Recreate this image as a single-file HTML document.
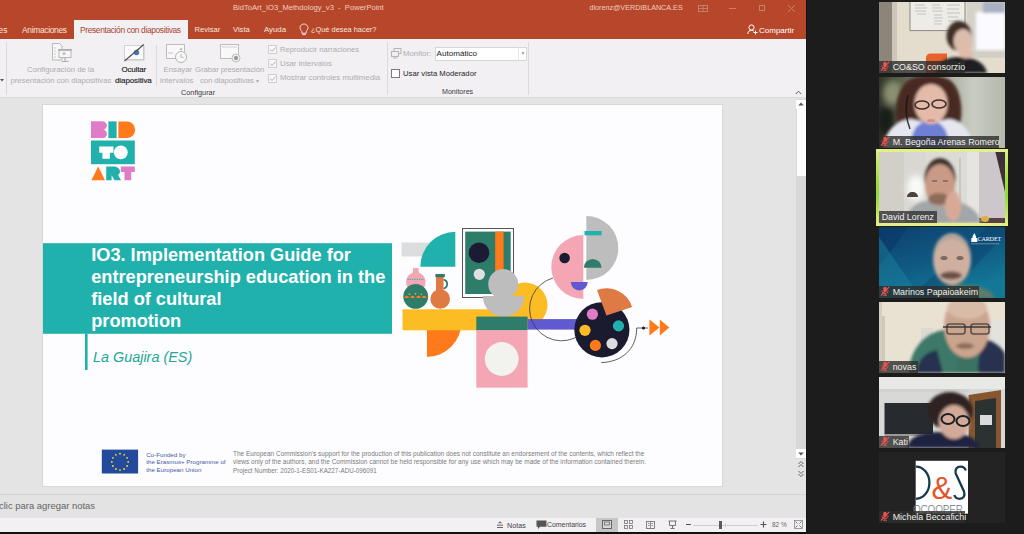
<!DOCTYPE html>
<html><head><meta charset="utf-8">
<style>
*{box-sizing:border-box}
html,body{margin:0;padding:0}
body{width:1024px;height:534px;overflow:hidden;position:relative;background:#1c1c1c;font-family:"Liberation Sans",sans-serif}
.a{position:absolute}
.t{position:absolute;white-space:nowrap;line-height:1}
#ppt{left:0;top:0;width:806px;height:532px;overflow:hidden}
#title{left:0;top:0;width:806px;height:39px;background:#b7472a}
#ribbon{left:0;top:39px;width:806px;height:58px;background:#f2f0f2}
#editor{left:0;top:97px;width:806px;height:398px;background:#e4e4e4;border-top:1px solid #d9d9d9}
#notes{left:0;top:494px;width:806px;height:24px;background:#e3e3e3;border-top:1px solid #d3d3d3}
#status{left:0;top:518px;width:806px;height:14px;background:#f2f0f2}
.tw{color:#f6e6de}
.gr{color:#adadad}
.dk{color:#3c3c3c}
.sep{position:absolute;width:1px;background:#dadada}
.tile{position:absolute;left:879px;width:126px;height:71px;overflow:hidden}
.nb{position:absolute;left:0;bottom:0;height:12.5px;background:rgba(45,45,42,.8)}
.nm{position:absolute;top:2px;color:#f0f0f0;font-size:8.9px;line-height:1;white-space:nowrap}
.mic{position:absolute;left:2px;top:2px;width:10px;height:10px}
</style></head><body>
<div id="ppt" class="a">
  <div id="title" class="a"></div>
  <!-- title bar texts -->
  <div class="t" style="left:233px;top:4px;font-size:7.6px;color:#efcfc3">BidToArt_IO3_Methdology_v3&nbsp; - &nbsp;PowerPoint</div>
  <div class="t" style="left:589.5px;top:4px;font-size:7.2px;color:#efcfc3">dlorenz@VERDIBLANCA.ES</div>
  <!-- tabs -->
  <div class="t tw" style="left:-1.5px;top:25.5px;font-size:8.4px">es</div>
  <div class="t tw" style="left:22px;top:25.5px;font-size:8.4px;letter-spacing:-.3px">Animaciones</div>
  <div class="a" style="left:74px;top:20px;width:114px;height:19px;background:#f2f0f2"></div>
  <div class="t" style="left:80px;top:25.5px;font-size:8.4px;color:#a8442e;letter-spacing:-.35px">Presentación con diapositivas</div>
  <div class="t tw" style="left:194.5px;top:25.5px;font-size:7.6px">Revisar</div>
  <div class="t tw" style="left:233px;top:25.5px;font-size:7.6px">Vista</div>
  <div class="t tw" style="left:264px;top:25.5px;font-size:7.8px">Ayuda</div>
  <div class="t tw" style="left:311px;top:25.5px;font-size:7.4px">¿Qué desea hacer?</div>
  <div class="t" style="left:759px;top:26.5px;font-size:8px;color:#fff">Compartir</div>

  <div id="ribbon" class="a"></div>
  <!-- title bar controls -->
  <svg class="a" style="left:697px;top:4px" width="12" height="9" viewBox="0 0 12 9"><rect x="1.5" y="1.5" width="9" height="6" fill="none" stroke="#c47e68" stroke-width="1"/><line x1="1.5" y1="4.5" x2="10.5" y2="4.5" stroke="#c47e68"/><line x1="6" y1="1.5" x2="6" y2="7.5" stroke="#c47e68"/></svg>
  <div class="a" style="left:729px;top:8px;width:7px;height:1px;background:#c88068"></div>
  <div class="a" style="left:759px;top:5px;width:6px;height:6px;border:1px solid #c88068"></div>
  <svg class="a" style="left:787px;top:4px" width="9" height="9" viewBox="0 0 9 9"><path d="M1 1L8 8M8 1L1 8" stroke="#c88068" stroke-width="1"/></svg>
  <svg class="a" style="left:747px;top:24px" width="11" height="11" viewBox="0 0 11 11"><circle cx="4.5" cy="3.5" r="2.6" fill="none" stroke="#fff" stroke-width="1"/><path d="M0.8 10C1 7.3 2.5 6.4 4.5 6.4C5.5 6.4 6.3 6.7 6.9 7.2" fill="none" stroke="#fff" stroke-width="1"/><path d="M8.5 6.5V10.5M6.5 8.5H10.5" stroke="#fff" stroke-width="1"/></svg>
  <svg class="a" style="left:299px;top:23px" width="10" height="13" viewBox="0 0 10 13"><path d="M5 1C2.7 1 1 2.7 1 4.8C1 6.5 2.3 7.4 2.8 8.6V10.2H7.2V8.6C7.7 7.4 9 6.5 9 4.8C9 2.7 7.3 1 5 1Z" fill="none" stroke="#f2dcd2" stroke-width="1"/><path d="M3.2 11.6H6.8" stroke="#f2dcd2"/></svg>

  <!-- ribbon content -->
  <div class="sep" style="left:6px;top:42px;height:53px"></div>
  <svg class="a" style="left:0;top:79px" width="4" height="3" viewBox="0 0 4 3"><path d="M0 0H4L2 2.5Z" fill="#555"/></svg>
  <!-- config icon -->
  <svg class="a" style="left:51px;top:43px" width="22" height="20" viewBox="0 0 22 20"><path d="M1.5 0.5H8.5L11 3V17H1.5Z" fill="#f7f7f7" stroke="#b8b8b8"/><path d="M3 5h2M3 8h2M3 11h2M3 14h2" stroke="#c9c9c9"/><rect x="7" y="6" width="14" height="1.5" fill="#b0b0b0"/><rect x="8" y="7.5" width="12" height="7" fill="#f7f7f7" stroke="#b8b8b8"/><circle cx="13" cy="10.5" r="1.6" fill="#c0c0c0"/><path d="M14 14.5V18M10.5 18.5H17.5" stroke="#b0b0b0" stroke-width="1.2"/></svg>
  <div class="t gr" style="left:27px;top:66px;font-size:7.8px">Configuración de la</div>
  <div class="t gr" style="left:10.5px;top:76.5px;font-size:7.8px;letter-spacing:-.05px">presentación con diapositivas</div>
  <!-- ocultar icon -->
  <svg class="a" style="left:123px;top:43px" width="22" height="19" viewBox="0 0 22 19"><rect x="1.5" y="2.5" width="19" height="14" fill="#fbfbfb" stroke="#d2d2d2"/><path d="M2 17H21V3" fill="none" stroke="#c4c4c4" stroke-width="1"/><circle cx="13.5" cy="9.5" r="2.7" fill="#3b78c4"/><path d="M13.5 9.5V6.8A2.7 2.7 0 0 0 10.9 8.8Z" fill="#e8843c"/><path d="M1.5 18L20.8 1.5" stroke="#4a4a4a" stroke-width="1.1"/></svg>
  <div class="t" style="left:121.5px;top:66px;font-size:8px;color:#1e1e1e;-webkit-text-stroke:.15px #1e1e1e;letter-spacing:-.2px">Ocultar</div>
  <div class="t" style="left:115px;top:76.5px;font-size:8px;color:#1e1e1e;-webkit-text-stroke:.15px #1e1e1e;letter-spacing:-.1px">diapositiva</div>
  <div class="sep" style="left:156px;top:45px;height:41px"></div>
  <!-- ensayar icon -->
  <svg class="a" style="left:166px;top:44px" width="22" height="20" viewBox="0 0 22 20"><rect x="0.5" y="0.5" width="18" height="14" fill="#f8f8f8" stroke="#bdbdbd"/><path d="M2 9h5" stroke="#c8c8c8"/><circle cx="15" cy="13" r="5.5" fill="#f8f8f8" stroke="#b4b4b4"/><path d="M15 10v3.3h2.5" stroke="#b4b4b4" fill="none"/><path d="M13.5 4.5h3l-1.5 2z" fill="#a0a0a0"/></svg>
  <div class="t gr" style="left:163.5px;top:66px;font-size:7.8px">Ensayar</div>
  <div class="t gr" style="left:160px;top:76.5px;font-size:7.8px">intervalos</div>
  <!-- grabar icon -->
  <svg class="a" style="left:220px;top:44px" width="22" height="20" viewBox="0 0 22 20"><rect x="0.5" y="0.5" width="18" height="14" fill="#f8f8f8" stroke="#bdbdbd"/><path d="M2 3h15" stroke="#d0d0d0"/><circle cx="16" cy="14" r="4" fill="#f4f4f4" stroke="#bdbdbd"/><circle cx="16" cy="14" r="2.2" fill="#9a9a9a"/></svg>
  <div class="t gr" style="left:195px;top:66px;font-size:7.8px;letter-spacing:-.1px">Grabar presentación</div>
  <div class="t gr" style="left:200px;top:76.5px;font-size:7.8px;letter-spacing:-.1px">con diapositivas <span style="font-size:6px">▾</span></div>
  <!-- checkboxes -->
  <div class="a" style="left:268px;top:45px;width:9px;height:9px;border:1px solid #cfcfcf;background:#f8f8f8"></div>
  <div class="a" style="left:268px;top:59px;width:9px;height:9px;border:1px solid #cfcfcf;background:#f8f8f8"></div>
  <div class="a" style="left:268px;top:74px;width:9px;height:9px;border:1px solid #cfcfcf;background:#f8f8f8"></div>
  <svg class="a" style="left:268px;top:45px" width="9" height="40" viewBox="0 0 9 40"><path d="M2 4.5l2 2 3.5-4M2 18.5l2 2 3.5-4M2 33.5l2 2 3.5-4" fill="none" stroke="#b0b0b0" stroke-width="1"/></svg>
  <div class="t gr" style="left:280px;top:45.5px;font-size:7.6px">Reproducir narraciones</div>
  <div class="t gr" style="left:280px;top:59.5px;font-size:7.8px">Usar intervalos</div>
  <div class="t gr" style="left:280px;top:74px;font-size:7.8px">Mostrar controles multimedia</div>
  <div class="t dk" style="left:181px;top:88.5px;font-size:7.3px">Configurar</div>
  <div class="sep" style="left:387px;top:42px;height:53px"></div>
  <!-- monitors -->
  <svg class="a" style="left:391px;top:48px" width="11" height="11" viewBox="0 0 11 11"><rect x="3" y="0.5" width="7" height="5" fill="#f0f0f0" stroke="#b5b5b5"/><rect x="0.5" y="3.5" width="7" height="5" fill="#f0f0f0" stroke="#b5b5b5"/><path d="M2 10h4" stroke="#b5b5b5"/></svg>
  <div class="t gr" style="left:403px;top:50px;font-size:7.8px">Monitor:</div>
  <div class="a" style="left:435px;top:46.5px;width:91.5px;height:14px;background:#fff;border:1px solid #d6d6d6"></div>
  <div class="a" style="left:518px;top:47px;width:1px;height:13px;background:#e6e6e6"></div>
  <div class="t" style="left:520.5px;top:51px;font-size:5px;color:#999">▼</div>
  <div class="t" style="left:436.5px;top:49.5px;font-size:8.1px;color:#222">Automático</div>
  <div class="a" style="left:391px;top:69px;width:9px;height:9px;border:1px solid #7a7a7a;background:#fff"></div>
  <div class="t" style="left:403px;top:69.5px;font-size:7.7px;color:#262626">Usar vista Moderador</div>
  <div class="t dk" style="left:442px;top:88.5px;font-size:7.1px">Monitores</div>
  <div class="sep" style="left:528px;top:42px;height:53px"></div>
  <svg class="a" style="left:794.5px;top:89.5px" width="7" height="5" viewBox="0 0 7 5"><path d="M0.8 4L3.5 1.2L6.2 4" fill="none" stroke="#5a5a5a" stroke-width="1"/></svg>

  <div id="editor" class="a"></div>
  <div id="notes" class="a"></div>
  <div id="status" class="a"></div>
  <!-- scrollbar -->
  <div class="a" style="left:796px;top:99px;width:10px;height:360px;background:#d8d8d9"></div>
  <div class="a" style="left:796px;top:99.5px;width:9.5px;height:9px;background:#fff"></div>
  <svg class="a" style="left:797px;top:101px" width="8" height="6" viewBox="0 0 8 6"><path d="M1.2 4.5L4 1.6L6.8 4.5Z" fill="#555"/></svg>
  <div class="a" style="left:796px;top:109px;width:9.5px;height:67px;background:#fcfcfd;border-left:1px solid #d9d9d9"></div>
  <div class="a" style="left:796px;top:449px;width:9.5px;height:9px;background:#fff"></div>
  <svg class="a" style="left:797px;top:451px" width="8" height="6" viewBox="0 0 8 6"><path d="M1.2 1.5L4 4.4L6.8 1.5Z" fill="#555"/></svg>
  <svg class="a" style="left:797px;top:460px" width="8" height="18" viewBox="0 0 8 18"><path d="M1.5 4L4 1.5L6.5 4M1.5 7L4 4.5L6.5 7" fill="none" stroke="#666" stroke-width="1"/><path d="M1.5 11L4 13.5L6.5 11M1.5 14L4 16.5L6.5 14" fill="none" stroke="#666" stroke-width="1"/></svg>
  <!-- notes -->
  <div class="t" style="left:-1px;top:500.5px;font-size:9.45px;color:#636363">clic para agregar notas</div>
  <!-- status bar -->
  <svg class="a" style="left:496px;top:520px" width="8" height="9" viewBox="0 0 8 9"><path d="M2 3.2L4 1.2L6 3.2Z" fill="#666"/><path d="M1 5.2H7M1 7.5H7" stroke="#666" stroke-width="1"/></svg>
  <div class="t" style="left:507px;top:521.8px;font-size:7.2px;color:#444">Notas</div>
  <svg class="a" style="left:535.5px;top:520px" width="11" height="10" viewBox="0 0 11 10"><path d="M0.5 0.5H10.5V6.8H4L2 9V6.8H0.5Z" fill="#555"/></svg>
  <div class="t" style="left:547px;top:521.8px;font-size:6.9px;color:#444">Comentarios</div>
  <div class="a" style="left:596px;top:518px;width:22px;height:14px;background:#c6c6c6"></div>
  <svg class="a" style="left:602px;top:520px" width="10" height="9" viewBox="0 0 10 9"><rect x="0.5" y="0.5" width="9" height="8" fill="#d8d8d8" stroke="#666"/><rect x="2.5" y="2" width="5" height="3" fill="none" stroke="#666" stroke-width=".8"/></svg>
  <svg class="a" style="left:624px;top:520px" width="9" height="9" viewBox="0 0 9 9"><rect x="0.5" y="0.5" width="3" height="3" fill="none" stroke="#777" stroke-width=".8"/><rect x="5.5" y="0.5" width="3" height="3" fill="none" stroke="#777" stroke-width=".8"/><rect x="0.5" y="5.5" width="3" height="3" fill="none" stroke="#777" stroke-width=".8"/><rect x="5.5" y="5.5" width="3" height="3" fill="none" stroke="#777" stroke-width=".8"/></svg>
  <svg class="a" style="left:646px;top:520.5px" width="9" height="8" viewBox="0 0 9 8"><rect x="0.5" y="0.5" width="8" height="7" fill="none" stroke="#777" stroke-width=".9"/><path d="M4.5 0.5V7.5M2 2.5h1.5M2 4.5h1.5M5.5 2.5h1.5M5.5 4.5h1.5" stroke="#777" stroke-width=".8"/></svg>
  <svg class="a" style="left:668px;top:520px" width="9" height="9" viewBox="0 0 9 9"><path d="M0.5 1H8.5M1.5 1V5.5H7.5V1M4.5 5.5V8M2.5 8.5H6.5" fill="none" stroke="#777" stroke-width="1"/></svg>
  <div class="a" style="left:686px;top:524px;width:5px;height:1.2px;background:#555"></div>
  <div class="a" style="left:693px;top:524.5px;width:65px;height:1px;background:#cfcfcf"></div>
  <div class="a" style="left:725px;top:522.5px;width:1px;height:4px;background:#cfcfcf"></div>
  <div class="a" style="left:718.5px;top:521px;width:3px;height:7.5px;background:#5a5a5a"></div>
  <svg class="a" style="left:760px;top:521px" width="7" height="7" viewBox="0 0 7 7"><path d="M3.5 0.5V6.5M0.5 3.5H6.5" stroke="#555" stroke-width="1.2"/></svg>
  <div class="t" style="left:772px;top:521.8px;font-size:6.5px;color:#666">82 %</div>
  <svg class="a" style="left:794px;top:520px" width="9" height="9" viewBox="0 0 9 9"><rect x="0.5" y="0.5" width="8" height="8" fill="none" stroke="#888" stroke-width=".8"/><path d="M1.5 1.5L3.5 3.5M7.5 1.5L5.5 3.5M1.5 7.5L3.5 5.5M7.5 7.5L5.5 5.5" stroke="#666" stroke-width=".9"/></svg>

  <!-- slide -->
  <div id="slide" class="a" style="left:43px;top:105px;width:679px;height:381px;background:#fdfdff;box-shadow:0 0 0 1px #d8d8d8"></div>
  <svg class="a" style="left:0;top:0" width="806" height="532" viewBox="0 0 806 532">
    <!-- logo -->
    <path d="M91 121.4H102.6A4.2 4.2 0 0 1 102.6 129.75A4.2 4.2 0 0 1 102.6 138.1H91Z" fill="#e07bc7"/>
    <path d="M91 121.4H102.3A4.6 4.17 0 0 1 106.9 125.6V125.6A4.6 4.17 0 0 1 102.3 129.75A4.6 4.17 0 0 1 106.9 133.9A4.6 4.17 0 0 1 102.3 138.1H91Z" fill="#e07bc7"/>
    <rect x="108.4" y="121.4" width="8.2" height="16.7" fill="#21b1ad"/>
    <path d="M118.4 121.4H126.8A8.4 8.35 0 0 1 126.8 138.1H118.4Z" fill="#ff7a1a"/>
    <rect x="91" y="140.5" width="43.8" height="23.7" fill="#21b1ad"/>
    <path d="M99.2 146.6H113.5V152.7H109.9V158.8H102.4V152.7H99.2Z" fill="#fdfdff"/>
    <circle cx="120.8" cy="152.4" r="6.9" fill="#fdfdff"/>
    <path d="M91.4 180.3L98.2 166.4L105 180.3Z" fill="#ff7a1a"/>
    <path d="M106.2 166.4H113.8C117.6 166.4 120 168.9 120 171.6C120 173.2 119.2 174.3 118.1 174.9L121.1 180.3H114.6L111.6 175.2V180.3H106.2Z" fill="#21b1ad"/>
    <path d="M120.8 166.4H134.8V172.1H131.2V180.3H124.5V172.1H120.8Z" fill="#e07bc7"/>

    <!-- title banner -->
    <rect x="43" y="243.2" width="349" height="90.6" fill="#21b1ad"/>
    <rect x="85" y="333.5" width="2.6" height="36.5" fill="#21b1ad"/>

    <!-- illustration -->
    <rect x="401.6" y="242.5" width="35" height="14" fill="#dcdddf"/>
    <path d="M455.3 266.8V231.8A35 35 0 0 0 420.3 266.8Z" fill="#21b1ad"/>
    <rect x="462.5" y="228.5" width="51" height="69" fill="#fdfdff" stroke="#555" stroke-width="1"/>
    <rect x="465.2" y="231.6" width="45.5" height="62.4" fill="#2e7d6b"/>
    <circle cx="479" cy="252.8" r="10.3" fill="#1b1b33"/>
    <circle cx="479.3" cy="274.3" r="5.6" fill="#e0e0e0"/>
    <rect x="495.2" y="231.6" width="8.4" height="45" fill="#ff7a1a"/>
    <!-- vases -->
    <rect x="412.9" y="268.1" width="5.8" height="6" fill="#f4a6b5"/>
    <circle cx="415.8" cy="282" r="9.8" fill="#f4a6b5"/>
    <path d="M407.5 279.3H424" stroke="#21b1ad" stroke-width="1" stroke-dasharray="1.3 1"/>
    <circle cx="415.7" cy="296.4" r="12.4" fill="#2e7d6b"/>
    <path d="M404.5 298a2.2 2.2 0 0 1 4.4 0zM410.3 298a2.2 2.2 0 0 1 4.4 0zM416.3 298a2.2 2.2 0 0 1 4.4 0zM422 298a2.2 2.2 0 0 1 4.4 0z" fill="#ff7a1a"/><g fill="#fbbc24"><circle cx="409.5" cy="294.2" r=".8"/><circle cx="415.5" cy="293.7" r=".8"/><circle cx="421.3" cy="294.2" r=".8"/></g>
    <path d="M443.5 279.6a4.6 4.6 0 0 1 0 9" fill="none" stroke="#2e7d6b" stroke-width="1.8"/>
    <rect x="436" y="276" width="7.5" height="16" fill="#e07a45"/>
    <circle cx="440.2" cy="299" r="9.8" fill="#e07a45"/>
    <rect x="435.4" y="274" width="9.4" height="3.2" fill="#2e7d6b"/>
    <!-- yellow bar, orange quarter -->
    <path d="M427 330V357A35 35 0 0 0 461.5 322H427Z" fill="#ff7a1a"/>
    <circle cx="525" cy="305" r="22.5" fill="#fbbc24"/>
    <rect x="402.5" y="309.3" width="120" height="21" fill="#fbbc24"/>
    <!-- bust -->
    <path d="M482.8 296H524.2A20.7 20.7 0 0 1 482.8 296Z" fill="#bdbdbd"/>
    <circle cx="503.2" cy="284" r="15" fill="#bdbdbd"/>
    <rect x="527.6" y="319.1" width="50" height="10.5" fill="#6159d0"/>
    <rect x="476.3" y="316.6" width="51.3" height="13.8" fill="#2e7d6b"/>
    <rect x="476.3" y="330.4" width="51.3" height="57.2" fill="#f4a6b5"/>
    <circle cx="501.7" cy="359" r="16.9" fill="#f2f2ee"/>
    <!-- face -->
    <path d="M583.3 235A32 32 0 0 0 583.3 299Z" fill="#f4a6b5"/>
    <path d="M586.3 216A32 32 0 0 1 586.3 280Z" fill="#bdbdbd"/>
    <circle cx="564.6" cy="258" r="5.3" fill="#1b1b33"/>
    <rect x="584.5" y="231" width="17.1" height="4.3" fill="#21b1ad"/>
    <path d="M583.8 267.8A8.9 8.9 0 0 1 601.6 267.8Z" fill="#2e7d6b"/>
    <path d="M570.8 282H587.7A8.45 8.45 0 0 1 570.8 282Z" fill="#6159d0"/>
    <!-- thin arc -->
    <path d="M553 278A32 32 0 1 0 580 335" fill="none" stroke="#3a3a3a" stroke-width="0.8"/>
    <!-- palette -->
    <circle cx="601.9" cy="329.8" r="27.6" fill="#1a1b2e"/>
    <path d="M606.4 315.4L597 290A27.1 27.1 0 0 1 632.2 307Z" fill="#e07a45"/>
    <circle cx="592.4" cy="314.2" r="5.6" fill="#e07bc7"/>
    <circle cx="618.5" cy="325.9" r="5.6" fill="#21b1ad"/>
    <circle cx="585" cy="330.3" r="5.6" fill="#fbbc24"/>
    <circle cx="595.4" cy="345.4" r="5.6" fill="#ff7a1a"/>
    <circle cx="612" cy="343.6" r="5.6" fill="#dddddd"/>
    <path d="M601.3 362.6C621 362 636.7 350 636.7 328H648" fill="none" stroke="#3a3a3a" stroke-width="0.8"/>
    <circle cx="643.5" cy="328" r="1.6" fill="#1b1b33"/>
    <path d="M649.4 319.6V335.6L659.5 327.6ZM659.8 319.6V335.6L669.3 327.6Z" fill="#ff7a1a"/>

    <!-- EU flag -->
    <rect x="101.8" y="449.6" width="36.3" height="23.9" fill="#244a9c"/>
    <g fill="#f5e02a">
      <circle cx="120" cy="453.7" r="0.9"/><circle cx="124.1" cy="454.8" r="0.9"/><circle cx="127.1" cy="457.8" r="0.9"/><circle cx="128.2" cy="461.9" r="0.9"/><circle cx="127.1" cy="466" r="0.9"/><circle cx="124.1" cy="469" r="0.9"/><circle cx="120" cy="470.1" r="0.9"/><circle cx="115.9" cy="469" r="0.9"/><circle cx="112.9" cy="466" r="0.9"/><circle cx="111.8" cy="461.9" r="0.9"/><circle cx="112.9" cy="457.8" r="0.9"/><circle cx="115.9" cy="454.8" r="0.9"/>
    </g>
  </svg>
  <!-- slide texts -->
  <div class="t" style="left:91.2px;top:245.4px;font-size:18.2px;line-height:21.8px;font-weight:bold;color:#fff">IO3. Implementation Guide for<br>entrepreneurship education in the<br>field of cultural<br>promotion</div>
  <div class="t" style="left:93px;top:350px;font-size:14.4px;font-style:italic;color:#22a797">La Guajira (ES)</div>
  <div class="t" style="left:146.3px;top:450.5px;font-size:6.2px;line-height:7.7px;color:#3d5aa5">Co-Funded by<br>the Erasmus+ Programme of<br>the European Union</div>
  <div class="t" style="left:233px;top:450px;font-size:6.5px;line-height:8.4px;color:#7b7b7b">The European Commission's support for the production of this publication does not constitute an endorsement of the contents, which reflect the<br>views only of the authors, and the Commission cannot be held responsible for any use which may be made of the information contained therein.<br><span style="font-size:6.3px">Project Number: 2020-1-ES01-KA227-ADU-096091</span></div>
</div>
<div class="a" style="left:0;top:532px;width:806px;height:2px;background:#111"></div>
<div class="a" style="left:806px;top:0;width:1px;height:534px;background:#141414"></div>
<!-- zoom tiles -->
<svg width="0" height="0" style="position:absolute"><defs>
<symbol id="mic" viewBox="0 0 10 10"><rect x="3.3" y="0.8" width="3.4" height="5.4" rx="1.7" fill="#ee5252"/><path d="M2 4.6C2 6.6 3.4 7.6 5 7.6S8 6.6 8 4.6M5 7.6V9.3M3.2 9.3H6.8" fill="none" stroke="#ee5252" stroke-width="0.9"/><path d="M1 9.5L9.2 0.8" stroke="#ee5252" stroke-width="1.1"/></symbol>
<filter id="bl" x="-20%" y="-20%" width="140%" height="140%"><feGaussianBlur stdDeviation="1.6"/></filter>
<filter id="bl2" x="-30%" y="-30%" width="160%" height="160%"><feGaussianBlur stdDeviation="3"/></filter>
</defs></svg>

<!-- tile 1 CO&SO -->
<div class="tile" style="top:2px">
<svg width="126" height="71" viewBox="0 0 126 71">
<rect width="126" height="71" fill="#e4dccd"/>
<rect x="0" y="0" width="13" height="71" fill="#8c857a"/>
<rect x="13" y="0" width="5" height="71" fill="#cdc6b8"/>
<rect x="31" y="-1" width="55" height="29.6" fill="#eeece6" stroke="#8d8980" stroke-width="1"/>
<g stroke="#8a8a94" stroke-width="0.6" opacity=".7"><path d="M36 3h10M36 6h12M36 9h11M38 12h9M53 3h8M53 6h10M53 9h11M55 13h8M55 16h9M55 19h8M55 22h8M68 3h13M68 7h12M68 11h13M69 15h10M69 19h10"/></g>
<rect x="88" y="0" width="38" height="56" fill="#d6d2ca"/>
<g filter="url(#bl)"><rect x="97" y="10" width="29" height="38" fill="#fbfbff"/><rect x="104" y="0" width="22" height="11" fill="#a8b0c2"/></g>
<rect x="88" y="50" width="38" height="5" fill="#d2cdc5"/>
<path d="M47 71V56C47 53 49 51.6 52 51.6H68V71Z" fill="#e8602a"/>
<g filter="url(#bl)">
<path d="M57 71C58 61 66 55 80 55C96 55 106 61 108 71Z" fill="#1c1c20"/>
<ellipse cx="80" cy="34" rx="12.5" ry="15" fill="#3e2e26"/>
<ellipse cx="84" cy="39" rx="9.5" ry="12" fill="#dcbcac"/>
<ellipse cx="87" cy="51.5" rx="7" ry="5" fill="#e0bcaa"/>
</g>
</svg>
<div class="nb" style="width:86px"></div>
<svg class="mic" style="left:1.2px;top:59.3px"><use href="#mic"/></svg>
<div class="nm" style="left:13.7px;top:60.9px">CO&amp;SO consorzio</div>
</div>

<!-- tile 2 Begona -->
<div class="tile" style="top:77px">
<svg width="126" height="71" viewBox="0 0 126 71">
<defs><linearGradient id="g2" x1="0" x2="1" y1="0" y2="0"><stop offset="0" stop-color="#30342a"/><stop offset=".2" stop-color="#5e6452"/><stop offset=".5" stop-color="#a3a797"/><stop offset=".75" stop-color="#c9ccc2"/><stop offset="1" stop-color="#b4b7ac"/></linearGradient></defs>
<rect width="126" height="71" fill="url(#g2)"/>
<g filter="url(#bl2)"><ellipse cx="14" cy="16" rx="10" ry="12" fill="#8a9070"/><ellipse cx="7" cy="44" rx="8" ry="16" fill="#181a16"/></g>
<g filter="url(#bl)">
<path d="M20 52C14 40 16 12 30 3C40 -3 62 -3 72 4C84 14 84 40 80 50L60 56H40Z" fill="#482c22"/>
<path d="M4 71C6 54 16 44 32 42L50 46L70 42C84 44 92 54 95 71Z" fill="#e6e7ee"/>
<path d="M32 71C31 55 38 44 51 44C64 44 70 55 70 71Z" fill="#6f7fd6"/>
<ellipse cx="52" cy="27" rx="16.5" ry="20" fill="#e4baa8"/>
</g>
<path d="M29 18C26 30 27 42 31 52" fill="none" stroke="#151515" stroke-width="1.6" opacity=".8"/>
<ellipse cx="43" cy="28" rx="7" ry="4" fill="none" stroke="#3a302c" stroke-width="1.6"/>
<ellipse cx="60" cy="27" rx="7" ry="4" fill="none" stroke="#3a302c" stroke-width="1.6"/>
<ellipse cx="52" cy="43.5" rx="4" ry="1.5" fill="#d88a8e"/>
</svg>
<div class="nb" style="width:120px"></div>
<svg class="mic" style="left:1.2px;top:59.3px"><use href="#mic"/></svg>
<div class="nm" style="left:13.7px;top:60.9px">M. Begoña Arenas Romero</div>
</div>

<!-- tile 3 David (active) -->
<div class="a" style="left:876px;top:149px;width:132px;height:77px;background:linear-gradient(180deg,#e2ee86 0%,#9ee03a 40%,#8fdc2e 60%,#e2ee86 100%)"></div>
<div class="a" style="left:876px;top:149px;width:132px;height:3px;background:#e4ef88"></div>
<div class="a" style="left:876px;top:223px;width:132px;height:3px;background:#e4ef88"></div>
<div class="tile" style="top:152px">
<svg width="126" height="71" viewBox="0 0 126 71">
<rect width="126" height="71" fill="#dddbd6"/>
<rect x="0" y="0" width="25" height="71" fill="#d2cec8"/>
<rect x="25" y="0" width="22" height="71" fill="#d9d7d2"/>
<rect x="88" y="0" width="26" height="71" fill="#e6e4e0"/>
<rect x="80" y="6" width="2" height="50" fill="#c8c6c0"/>
<g filter="url(#bl2)"><ellipse cx="37" cy="36" rx="9" ry="13" fill="#fafaf8"/></g>
<path d="M28 45h11c0-3-2.5-5-5.5-5S28 42 28 45z" fill="#4a423e"/>
<rect x="100" y="0" width="26" height="71" fill="#cdc6ca"/>
<path d="M116.4 0H126V40Z" fill="#3e3038"/>
<rect x="100" y="66" width="26" height="5" fill="#5a4048"/>
<ellipse cx="106" cy="67" rx="4" ry="3" fill="#d8b040"/>
<g filter="url(#bl)">
<path d="M26 71C28 56 38 48 58 48C82 48 98 54 102 71Z" fill="#a2a6a8"/>
<ellipse cx="61" cy="27" rx="15.5" ry="21" fill="#3e322a"/>
<ellipse cx="61" cy="33" rx="15" ry="21" fill="#c99a86"/>
<ellipse cx="60" cy="47" rx="11" ry="6" fill="#8e6a58"/>
<ellipse cx="74" cy="54" rx="8" ry="15" fill="#d8aa96"/>
</g>
<path d="M53 29h5M64 29h5" stroke="#5a4a48" stroke-width="1.6" opacity=".7"/>
</svg>
<div class="nb" style="width:57.5px;background:rgba(50,50,50,.8)"></div>
<div class="nm" style="left:2.7px;top:60.9px">David Lorenz</div>
</div>

<!-- tile 4 Marinos -->
<div class="tile" style="top:227px">
<svg width="126" height="71" viewBox="0 0 126 71">
<defs><linearGradient id="g4" x1="0" x2="0.5" y1="0" y2="1"><stop offset="0" stop-color="#0d3f6c"/><stop offset=".55" stop-color="#0f5a82"/><stop offset="1" stop-color="#137896"/></linearGradient></defs>
<rect width="126" height="71" fill="url(#g4)"/>
<path d="M0 0H30L0 40Z" fill="#0a3866" opacity=".6"/>
<path d="M0 10L42 71H0Z" fill="#1a7f9c" opacity=".5"/>
<path d="M30 71L108 0H126V8L66 71Z" fill="#0a3a66" opacity=".35"/>
<g filter="url(#bl)">
<path d="M56 71C58 62 66 58 82 58C100 58 112 62 116 71Z" fill="#5e7c68"/>
<ellipse cx="73" cy="31" rx="19" ry="25" fill="#b2a49c"/>
<ellipse cx="73" cy="35" rx="18.5" ry="23" fill="#cfb0a0"/>
<ellipse cx="72" cy="48.5" rx="11" ry="4" fill="#6a5046"/>
</g>
<ellipse cx="65" cy="31" rx="3.5" ry="2" fill="#6a5650" opacity=".8"/>
<ellipse cx="81" cy="31" rx="3.5" ry="2" fill="#6a5650" opacity=".8"/>
<g fill="#fff"><path d="M93.5 9.5l1.8-3.5 1.8 3.5v1.5h1.2v4h-6v-4h1.2z"/><text x="98.5" y="14.2" font-family="Liberation Serif" font-size="6.2" fill="#fff" letter-spacing="-.2">CARDET</text><rect x="92" y="16.5" width="28" height="0.7" opacity=".5"/></g>
</svg>
<div class="nb" style="width:99.6px"></div>
<svg class="mic" style="left:1.2px;top:59.3px"><use href="#mic"/></svg>
<div class="nm" style="left:13.7px;top:60.9px">Marinos Papaioakeim</div>
</div>

<!-- tile 5 novas -->
<div class="tile" style="top:302px">
<svg width="126" height="71" viewBox="0 0 126 71">
<rect width="126" height="71" fill="#e9e1d2"/>
<rect x="0" y="0" width="3" height="71" fill="#d6cebe"/>
<rect x="3" y="14" width="3" height="48" fill="#cfc8ba"/>
<rect x="42" y="26" width="12" height="22" fill="#dcd9d2"/>
<rect x="110" y="18" width="16" height="30" fill="#e4e2de"/>
<g filter="url(#bl)">
<path d="M30 71C30 50 44 30 66 28C94 26 118 38 124 71Z" fill="#3e7868"/>
<path d="M38 71C38 58 46 50 58 48L64 71ZM98 71L102 36C114 38 124 46 126 52V71Z" fill="#263250"/>
<path d="M76 71L80 52H96L100 71Z" fill="#3a7262"/>
<ellipse cx="88" cy="24" rx="23" ry="32" fill="#cba48e"/>
<ellipse cx="88" cy="6" rx="20" ry="11" fill="#d8bca8"/>
<ellipse cx="86" cy="44" rx="9" ry="3" fill="#8a6a5a"/>
</g>
<path d="M64 25h48" stroke="#333335" stroke-width="2" opacity=".7"/>
<rect x="68" y="22" width="18" height="10" rx="2.5" fill="none" stroke="#333335" stroke-width="1.6" opacity=".75"/>
<rect x="92" y="22" width="18" height="10" rx="2.5" fill="none" stroke="#333335" stroke-width="1.6" opacity=".75"/>
</svg>
<div class="nb" style="width:39px"></div>
<svg class="mic" style="left:1.2px;top:59.3px"><use href="#mic"/></svg>
<div class="nm" style="left:13.7px;top:60.9px">novas</div>
</div>

<!-- tile 6 Kati -->
<div class="tile" style="top:377px">
<svg width="126" height="71" viewBox="0 0 126 71">
<rect width="126" height="71" fill="#d8d8d6"/>
<rect width="126" height="12" fill="#e8e8e6"/>
<rect x="0" y="12" width="90" height="3" fill="#d0d0ce"/>
<rect x="5.5" y="26" width="48.5" height="31" fill="#272b2f"/>
<rect x="5.5" y="57" width="48.5" height="2" fill="#9a9a9a"/>
<path d="M89.6 18L122 13V71H89.6Z" fill="#86572f"/>
<path d="M96 24L117 21V71H96Z" fill="#2c3232"/>
<rect x="101" y="38" width="12" height="10" fill="#d8dadc"/>
<g filter="url(#bl)">
<path d="M28 71C30 60 40 55 62 55C86 55 98 60 100 71Z" fill="#1d2340"/>
<ellipse cx="71" cy="34" rx="23" ry="19" fill="#2e2424"/>
<ellipse cx="75" cy="45" rx="15" ry="17" fill="#d2aa9a"/>
</g>
<ellipse cx="69" cy="42" rx="6.5" ry="5" fill="none" stroke="#1e1e22" stroke-width="2"/>
<ellipse cx="84" cy="44" rx="6.5" ry="5" fill="none" stroke="#1e1e22" stroke-width="2"/>
</svg>
<div class="nb" style="width:30px"></div>
<svg class="mic" style="left:1.2px;top:59.3px"><use href="#mic"/></svg>
<div class="nm" style="left:13.7px;top:60.9px">Kati</div>
</div>

<!-- tile 7 Michela -->
<div class="tile" style="top:452px;background:#232323">
<svg width="126" height="71" viewBox="0 0 126 71">
<rect x="36.7" y="8.8" width="52.3" height="52.7" fill="#fff"/>
<path d="M37 14.6A13.4 16.1 0 0 1 37 46.8" fill="none" stroke="#17394a" stroke-width="2.3"/>
<path d="M86.8 18.5C86 15.8 84 14.6 81.5 14.6C77.8 14.6 75.8 17.5 76.6 21.2L85 39.5C86.3 43.8 84.6 46.8 80.6 46.8C77.9 46.8 76.1 45.5 75.3 43" fill="none" stroke="#17394a" stroke-width="2.3"/>
<text x="52.6" y="46.8" font-family="Liberation Sans" font-size="31" fill="#e5532a">&amp;</text>
<text x="34" y="61" font-family="Liberation Sans" font-size="10" fill="#6f7a7e" letter-spacing="-.2">OCOOPER</text>
<rect x="36.7" y="54" width="52.3" height="8" fill="#fff" opacity=".25"/>
</svg>
<div class="nb" style="width:86px"></div>
<svg class="mic" style="left:1.2px;top:59.3px"><use href="#mic"/></svg>
<div class="nm" style="left:13.7px;top:60.9px">Michela Beccafichi</div>
</div>
</body></html>
